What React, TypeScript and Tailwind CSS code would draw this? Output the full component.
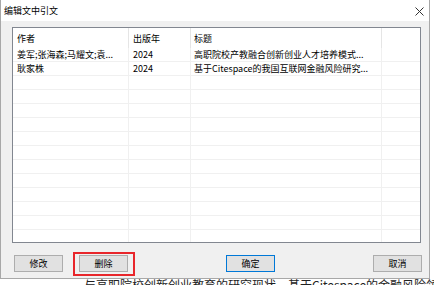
import React from "react";

const font = { fontFamily: '"Noto Sans CJK SC", "Microsoft YaHei", "Noto Sans", sans-serif' };

const rows = [
  ["姜军;张海森;马耀文;袁...", "2024", "高职院校产教融合创新创业人才培养模式..."],
  ["耿家株", "2024", "基于Citespace的我国互联网金融风险研究..."],
];

function Row({ cells }: { cells: string[] }) {
  return (
    <div className="flex h-[14px] shrink-0 border-b border-[#f0f0f0] text-[9px] leading-[14px] text-black">
      <div className="w-[116px] shrink-0 truncate border-r border-[#f0f0f0] pl-[4px]">{cells[0]}</div>
      <div className="w-[62px] shrink-0 truncate border-r border-[#f0f0f0] pl-[4px]">{cells[1]}</div>
      <div className="w-[191px] shrink-0 truncate whitespace-nowrap border-r border-[#f0f0f0] pl-[3px]">{cells[2]}</div>
      <div className="flex-1" />
    </div>
  );
}

function Btn({ label, primary, className }: { label: string; primary?: boolean; className?: string }) {
  return (
    <div
      className={
        "flex h-[17px] w-[49px] shrink-0 items-center justify-center bg-[#e1e1e1] text-[9px] text-black border " +
        (primary ? "border-[#0078d7]" : "border-[#adadad]") +
        " " +
        (className ?? "")
      }
    >
      {label}
    </div>
  );
}

export default function App() {
  const empty = Array.from({ length: 14 }, () => ["", "", ""]);
  return (
    <div className="h-[285px] w-[434px] overflow-hidden bg-white" style={font}>
      <div className="flex h-[279px]">
        <div className="flex h-[279px] w-[430px] shrink-0 flex-col border border-t-0 border-[#a8a8a8] bg-[#f0f0f0]">
          <div className="flex h-[21px] shrink-0 items-center justify-between bg-white pl-[3px] pr-[5px] text-[9px] text-black">
            <span>编辑文中引文</span>
            <svg width="9" height="9" viewBox="0 0 9 9" className="mt-[1px]">
              <path d="M0.5 0.5 L8.5 8.5 M8.5 0.5 L0.5 8.5" stroke="#333" strokeWidth="1" />
            </svg>
          </div>
          <div className="flex flex-1 flex-col pl-[11px] pr-[8px] pt-[6px]">
            <div className="flex h-[216px] flex-col overflow-hidden border border-[#828790] bg-white">
              <div className="flex h-[20px] shrink-0 text-[9px] leading-[22px] text-black">
                <div className="w-[116px] shrink-0 border-r border-[#e5e5e5] pl-[4px]">作者</div>
                <div className="w-[62px] shrink-0 border-r border-[#e5e5e5] pl-[4px]">出版年</div>
                <div className="w-[191px] shrink-0 border-r border-[#e5e5e5] pl-[3px]">标题</div>
                <div className="flex-1" />
              </div>
              {rows.map((r, i) => (
                <Row key={i} cells={r} />
              ))}
              {empty.map((r, i) => (
                <Row key={"e" + i} cells={r} />
              ))}
            </div>
            <div className="mt-[12px] flex">
              <Btn label="修改" className="ml-[2px]" />
              <div className="relative ml-[16px]">
                <Btn label="删除" />
                <div className="absolute -left-[6px] -top-[3px] h-[24px] w-[62px] border-2 border-[#e8262b]" />
              </div>
              <Btn label="确定" primary className="ml-[98px]" />
              <Btn label="取消" className="ml-[98px]" />
            </div>
          </div>
        </div>
        <div className="flex-1 bg-white" />
      </div>
      <div className="h-[6px] overflow-hidden pl-[84px]">
        <div className="-mt-[1px] whitespace-nowrap text-[12px] leading-[14px] text-[#222]">
          与高职院校创新创业教育的研究现状，基于Citespace的金融风险领域研究进展分析
        </div>
      </div>
    </div>
  );
}
